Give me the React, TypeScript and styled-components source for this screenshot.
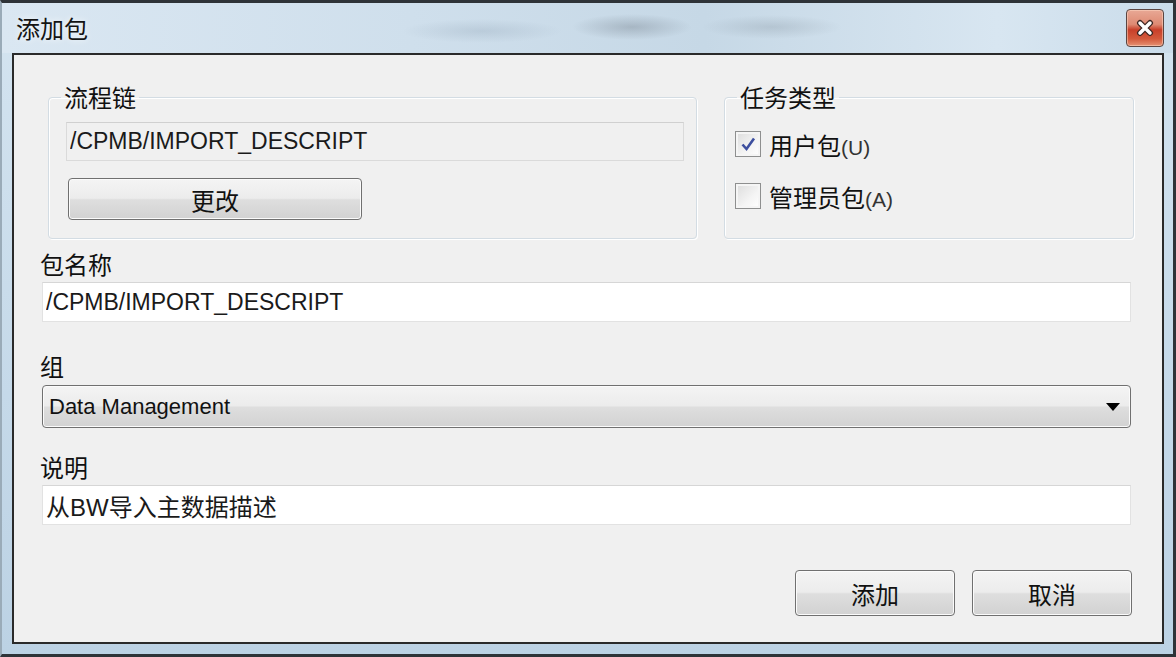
import React from 'react';
import styled, { createGlobalStyle } from 'styled-components';

const GlobalStyle = createGlobalStyle`
  html, body {
    margin: 0;
    padding: 0;
    background: #c8dbe9;
  }
  body {
    font-family: 'Liberation Sans', 'Noto Sans CJK SC', sans-serif;
    color: #111;
  }
`;

const Window = styled.div`
  box-sizing: border-box;
  width: 1176px;
  height: 657px;
  display: flex;
  flex-direction: column;
  border-top: 3px solid #2e3338;
  border-right: 3px solid #2e3338;
  border-bottom: 3px solid #2e3338;
  border-left: 2px solid #9aabb8;
  padding: 0 9px 10px 10px;
  background: linear-gradient(180deg, #d4e4f0 0%, #c5d9e9 60%, #bcd2e4 100%);
`;

const TitleBar = styled.div`
  height: 50px;
  flex: none;
  display: flex;
  align-items: center;
  justify-content: space-between;
  margin: 0 -9px 0 -10px;
  padding: 0 9px 0 14px;
  background:
    radial-gradient(ellipse 80px 12px at 480px 28px, rgba(120, 140, 160, 0.22), transparent),
    radial-gradient(ellipse 60px 13px at 630px 24px, rgba(90, 100, 112, 0.3), transparent),
    radial-gradient(ellipse 70px 12px at 770px 24px, rgba(105, 118, 130, 0.22), transparent),
    linear-gradient(90deg, #dae7f2 0%, #cfdfec 35%, #c6d8e6 60%, #d8e6f1 85%, #cadcea 100%);
`;

const Title = styled.span`
  font-family: 'Noto Sans CJK SC', sans-serif;
  font-size: 24px;
  line-height: 24px;
  color: #141414;
  text-shadow: 0 0 6px rgba(255, 255, 255, 0.9);
`;

const CloseButton = styled.div`
  box-sizing: border-box;
  width: 38px;
  height: 38px;
  border: 1px solid #5b4541;
  border-radius: 4px;
  display: flex;
  align-items: center;
  justify-content: center;
  background: linear-gradient(180deg, #e8a895 0%, #de8a73 40%, #c8402a 55%, #d35a3c 80%, #e59274 100%);
  box-shadow: inset 0 0 0 1px rgba(255, 220, 200, 0.5);
`;

const Client = styled.div`
  flex: 1;
  box-sizing: border-box;
  border: 2px solid #2a2a2a;
  background: #f0f0f0;
  padding: 30px 31px 0 28px;
  display: flex;
  flex-direction: column;
`;

const TopRow = styled.div`
  display: grid;
  grid-template-columns: 649px 410px;
  column-gap: 27px;
  margin: 0 -3px 0 6px;
`;

const GroupBox = styled.fieldset`
  margin: 0;
  padding: 0;
  min-width: 0;
  border: 1px solid #d3dce3;
  border-radius: 4px;
  box-shadow: inset 1px 1px 0 #fff, 1px 1px 0 #fff;
`;

const Legend = styled.legend`
  margin-left: 12px;
  padding: 0 3px;
  font-family: 'Noto Sans CJK SC', sans-serif;
  font-size: 24px;
  line-height: 24px;
  color: #111;
`;

const ChainBody = styled.div`
  display: flex;
  flex-direction: column;
  align-items: flex-start;
  gap: 17px;
  padding: 13px 12px 18px 17px;
`;

const TypeBody = styled.div`
  display: flex;
  flex-direction: column;
  gap: 26px;
  padding: 22px 10px 0 10px;
`;

const TextBox = styled.input<{ $disabled?: boolean }>`
  box-sizing: border-box;
  width: 100%;
  height: ${p => (p.$disabled ? '39px' : '40px')};
  margin: 0;
  padding: 0 3px;
  border: 1px solid ${p => (p.$disabled ? '#dadada' : '#e2e2e2')};
  border-top-color: ${p => (p.$disabled ? '#d0d0d0' : '#d6d6d6')};
  background: ${p => (p.$disabled ? '#f0f0f0' : '#ffffff')};
  font-family: 'Liberation Sans', 'Noto Sans CJK SC', sans-serif;
  font-size: 23px;
  color: #1a1a1a;
  outline: none;
`;

const CjkText = styled.span`
  font-size: 24px;
`;

const Button = styled.button<{ $width: number }>`
  box-sizing: border-box;
  width: ${p => p.$width}px;
  height: ${p => (p.$width > 200 ? 42 : 46)}px;
  border: 1px solid #707070;
  border-radius: 4px;
  background: linear-gradient(180deg, #f4f4f4 0%, #ececec 48%, #dedede 52%, #d2d2d2 100%);
  box-shadow: inset 0 0 0 1px #fbfbfb;
  font-family: 'Noto Sans CJK SC', sans-serif;
  font-size: 24px;
  color: #111;
  padding: 0;
`;

const CheckRow = styled.label`
  display: flex;
  align-items: center;
  gap: 8px;
  height: 26px;
  font-family: 'Liberation Sans', 'Noto Sans CJK SC', sans-serif;
  font-size: 24px;
  color: #111;
`;

const Hotkey = styled.span`
  font-size: 21px;
  color: #333;
`;

const CheckBox = styled.span`
  box-sizing: border-box;
  width: 26px;
  height: 26px;
  flex: none;
  border: 1px solid #8e8f8f;
  background: linear-gradient(135deg, #dcdcdc 0%, #f4f4f4 60%, #ffffff 100%);
  box-shadow: inset 0 0 0 2px #f5f5f5;
  display: flex;
  align-items: center;
  justify-content: center;
`;

const FieldLabel = styled.div<{ $gap: number }>`
  margin: ${p => p.$gap}px 0 6px -2px;
  font-family: 'Noto Sans CJK SC', sans-serif;
  font-size: 24px;
  line-height: 24px;
  color: #111;
`;

const Combo = styled.div`
  box-sizing: border-box;
  height: 43px;
  margin-top: 1px;
  display: flex;
  align-items: center;
  justify-content: space-between;
  padding: 0 10px 0 6px;
  border: 1px solid #707070;
  border-radius: 4px;
  background: linear-gradient(180deg, #f4f4f4 0%, #ececec 48%, #dedede 52%, #d2d2d2 100%);
  box-shadow: inset 0 0 0 1px #fbfbfb;
  font-size: 22px;
  color: #111;
`;

const Arrow = styled.span`
  width: 0;
  height: 0;
  border-left: 7px solid transparent;
  border-right: 7px solid transparent;
  border-top: 8px solid #000;
`;

const Footer = styled.div`
  display: flex;
  justify-content: flex-end;
  gap: 17px;
  margin-top: 45px;
  margin-right: -1px;
`;

const App: React.FC = () => {
  return (
    <>
      <GlobalStyle />
      <Window>
        <TitleBar>
          <Title>添加包</Title>
          <CloseButton>
            <svg width="18" height="18" viewBox="0 0 18 18">
              <path d="M4 4 L14 14 M14 4 L4 14" stroke="#3b2622" strokeWidth="6" strokeLinecap="round" />
              <path d="M4 4 L14 14 M14 4 L4 14" stroke="#ffffff" strokeWidth="3.5" strokeLinecap="round" />
            </svg>
          </CloseButton>
        </TitleBar>
        <Client>
          <TopRow>
            <GroupBox>
              <Legend>流程链</Legend>
              <ChainBody>
                <TextBox $disabled readOnly value="/CPMB/IMPORT_DESCRIPT" />
                <Button $width={294} style={{ marginLeft: 2 }}>更改</Button>
              </ChainBody>
            </GroupBox>
            <GroupBox>
              <Legend>任务类型</Legend>
              <TypeBody>
                <CheckRow>
                  <CheckBox>
                    <svg width="18" height="18" viewBox="0 0 18 18">
                      <path d="M3.5 9.5 L7.5 14 L15 3.5" fill="none" stroke="#3d4f9f" strokeWidth="2.6" />
                    </svg>
                  </CheckBox>
                  <span>用户包<Hotkey>(U)</Hotkey></span>
                </CheckRow>
                <CheckRow>
                  <CheckBox />
                  <span>管理员包<Hotkey>(A)</Hotkey></span>
                </CheckRow>
              </TypeBody>
            </GroupBox>
          </TopRow>

          <FieldLabel $gap={13}>包名称</FieldLabel>
          <TextBox readOnly value="/CPMB/IMPORT_DESCRIPT" />

          <FieldLabel $gap={32}>组</FieldLabel>
          <Combo>
            <span>Data Management</span>
            <Arrow />
          </Combo>

          <FieldLabel $gap={27}>说明</FieldLabel>
          <TextBox readOnly value="从BW导入主数据描述" style={{ fontSize: 24 }} />

          <Footer>
            <Button $width={160}>添加</Button>
            <Button $width={160}>取消</Button>
          </Footer>
        </Client>
      </Window>
    </>
  );
};

export default App;
